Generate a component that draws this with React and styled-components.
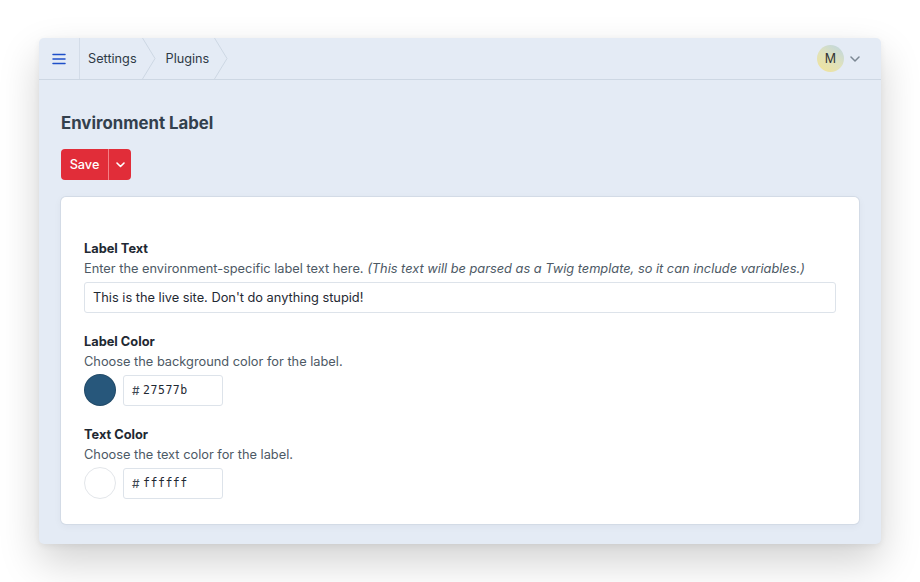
import React from 'react';
import styled, { createGlobalStyle } from 'styled-components';

const GlobalStyle = createGlobalStyle`
  html, body {
    margin: 0;
    padding: 0;
    background: #ffffff;
  }
  body {
    font-family: Inter, "Noto Sans", "Liberation Sans", sans-serif;
    -webkit-font-smoothing: antialiased;
  }
`;

const Page = styled.div`
  width: 920px;
  height: 582px;
  padding: 38px 39px;
  box-sizing: border-box;
  background: #ffffff;
`;

const Window = styled.div`
  height: 506px;
  background: #e4ebf5;
  border-radius: 5px;
  box-shadow: 0 18px 40px rgba(0, 0, 0, 0.18), 0 2px 6px rgba(0, 0, 0, 0.06);
  display: flex;
  flex-direction: column;
  overflow: hidden;
`;

const Header = styled.header`
  height: 41px;
  flex-shrink: 0;
  display: flex;
  align-items: stretch;
  border-bottom: 1px solid #cdd7e3;
`;

const MenuButton = styled.div`
  width: 40px;
  display: flex;
  align-items: center;
  justify-content: center;
  border-right: 1px solid #d3dce8;
  color: #1e4fc9;
`;

const Crumbs = styled.nav`
  display: flex;
  align-items: stretch;
`;

const Crumb = styled.div`
  display: flex;
  align-items: center;
  padding-left: ${p => (p.$first ? '8px' : '10px')};
  font-size: 12.7px;
  color: #2e3a46;
`;

const Chevron = styled.svg`
  width: 14px;
  height: 41px;
  margin-left: 5px;
  display: block;
`;

const Spacer = styled.div`
  flex: 1;
`;

const Account = styled.div`
  display: flex;
  align-items: center;
  gap: 6px;
  padding-right: 21px;
`;

const Avatar = styled.div`
  width: 27px;
  height: 27px;
  border-radius: 50%;
  background: linear-gradient(215deg, #bcd5e2 0%, #dfe2bd 50%, #f3e396 100%);
  display: flex;
  align-items: center;
  justify-content: center;
  font-size: 12.5px;
  color: #333;
`;

const Main = styled.main`
  flex: 1;
  padding: 32px 22px 20px;
  display: flex;
  flex-direction: column;
`;

const Title = styled.h1`
  margin: 0;
  font-size: 16.8px;
  font-weight: 700;
  color: #33404d;
  line-height: 22px;
`;

const SplitButton = styled.div`
  margin-top: 15px;
  display: flex;
  width: 70px;
  height: 31px;
  border-radius: 4px;
  background: #e12d39;
  overflow: hidden;
`;

const SaveLabel = styled.div`
  flex: 1;
  display: flex;
  align-items: center;
  justify-content: center;
  color: #fff;
  font-size: 12.7px;
  font-weight: 500;
  border-right: 1px solid #f37f86;
`;

const MenuPart = styled.div`
  width: 22px;
  display: flex;
  align-items: center;
  justify-content: center;
  color: #fff;
`;

const Card = styled.section`
  margin-top: 17px;
  flex: 1;
  background: #fff;
  border-radius: 5px;
  box-shadow: 0 0 0 1px #d3dbe6, 0 2px 8px rgba(31, 41, 51, 0.05);
  padding: 43px 23px 0;
`;

const Field = styled.div`
  margin-bottom: 20px;
`;

const Label = styled.div`
  font-size: 12.8px;
  font-weight: 700;
  color: #1f2933;
  line-height: 18px;
`;

const Instructions = styled.div`
  font-size: 12.8px;
  color: #4d5965;
  line-height: 18px;
  margin-top: 2px;
  em {
    font-style: italic;
  }
`;

const TextInput = styled.div`
  margin-top: 4px;
  height: 31px;
  box-sizing: border-box;
  border: 1px solid #dde3ea;
  border-radius: 3px;
  padding: 0 8px;
  display: flex;
  align-items: center;
  font-size: 12.8px;
  color: #1f2933;
`;

const ColorRow = styled.div`
  margin-top: 3px;
  display: flex;
  align-items: center;
  gap: 7px;
`;

const Swatch = styled.div`
  width: 32px;
  height: 32px;
  box-sizing: border-box;
  border-radius: 50%;
  background: ${p => p.$color};
  border: 1px solid ${p => (p.$light ? '#e3e6ea' : 'rgba(0,0,0,0.15)')};
`;

const HexInput = styled.div`
  width: 100px;
  height: 31px;
  box-sizing: border-box;
  border: 1px solid #dde3ea;
  border-radius: 3px;
  padding: 0 8px;
  display: flex;
  align-items: center;
  gap: 3px;
  color: #1f2933;
  font-family: "DejaVu Sans Mono", "Liberation Mono", monospace;
  font-size: 11.5px;
  letter-spacing: 0.5px;
`;

const Hash = styled.span`
  font-family: Inter, sans-serif;
  font-size: 12px;
  color: #3c4650;
`;

function BreadcrumbChevron() {
  return (
    <Chevron viewBox="0 0 14 41">
      <polyline points="0.5,0 13,20.5 0.5,41" fill="none" stroke="#cdd7e3" strokeWidth="1" />
    </Chevron>
  );
}

function ColorField({ label, instructions, color, light }) {
  return (
    <Field>
      <Label>{label}</Label>
      <Instructions>{instructions}</Instructions>
      <ColorRow>
        <Swatch $color={`#${color}`} $light={light} />
        <HexInput>
          <Hash>#</Hash>
          {color}
        </HexInput>
      </ColorRow>
    </Field>
  );
}

export default function App() {
  return (
    <>
      <GlobalStyle />
      <Page>
        <Window>
          <Header>
            <MenuButton>
              <svg width="14" height="12" viewBox="0 0 14 12">
                <path d="M1 1.5h12M1 6h12M1 10.5h12" stroke="currentColor" strokeWidth="1.5" strokeLinecap="round" />
              </svg>
            </MenuButton>
            <Crumbs>
              <Crumb $first>
                Settings
                <BreadcrumbChevron />
              </Crumb>
              <Crumb>
                Plugins
                <BreadcrumbChevron />
              </Crumb>
            </Crumbs>
            <Spacer />
            <Account>
              <Avatar>M</Avatar>
              <svg width="10" height="6" viewBox="0 0 10 6">
                <path d="M1 1l4 4 4-4" fill="none" stroke="#7b8793" strokeWidth="1.5" strokeLinecap="round" strokeLinejoin="round" />
              </svg>
            </Account>
          </Header>
          <Main>
            <Title>Environment Label</Title>
            <SplitButton>
              <SaveLabel>Save</SaveLabel>
              <MenuPart>
                <svg width="9" height="6" viewBox="0 0 9 6">
                  <path d="M1 1l3.5 3.5L8 1" fill="none" stroke="#fff" strokeWidth="1.6" strokeLinecap="round" strokeLinejoin="round" />
                </svg>
              </MenuPart>
            </SplitButton>
            <Card>
              <Field>
                <Label>Label Text</Label>
                <Instructions>
                  Enter the environment-specific label text here.{' '}
                  <em>(This text will be parsed as a Twig template, so it can include variables.)</em>
                </Instructions>
                <TextInput>This is the live site. Don't do anything stupid!</TextInput>
              </Field>
              <ColorField
                label="Label Color"
                instructions="Choose the background color for the label."
                color="27577b"
              />
              <ColorField
                label="Text Color"
                instructions="Choose the text color for the label."
                color="ffffff"
                light
              />
            </Card>
          </Main>
        </Window>
      </Page>
    </>
  );
}
